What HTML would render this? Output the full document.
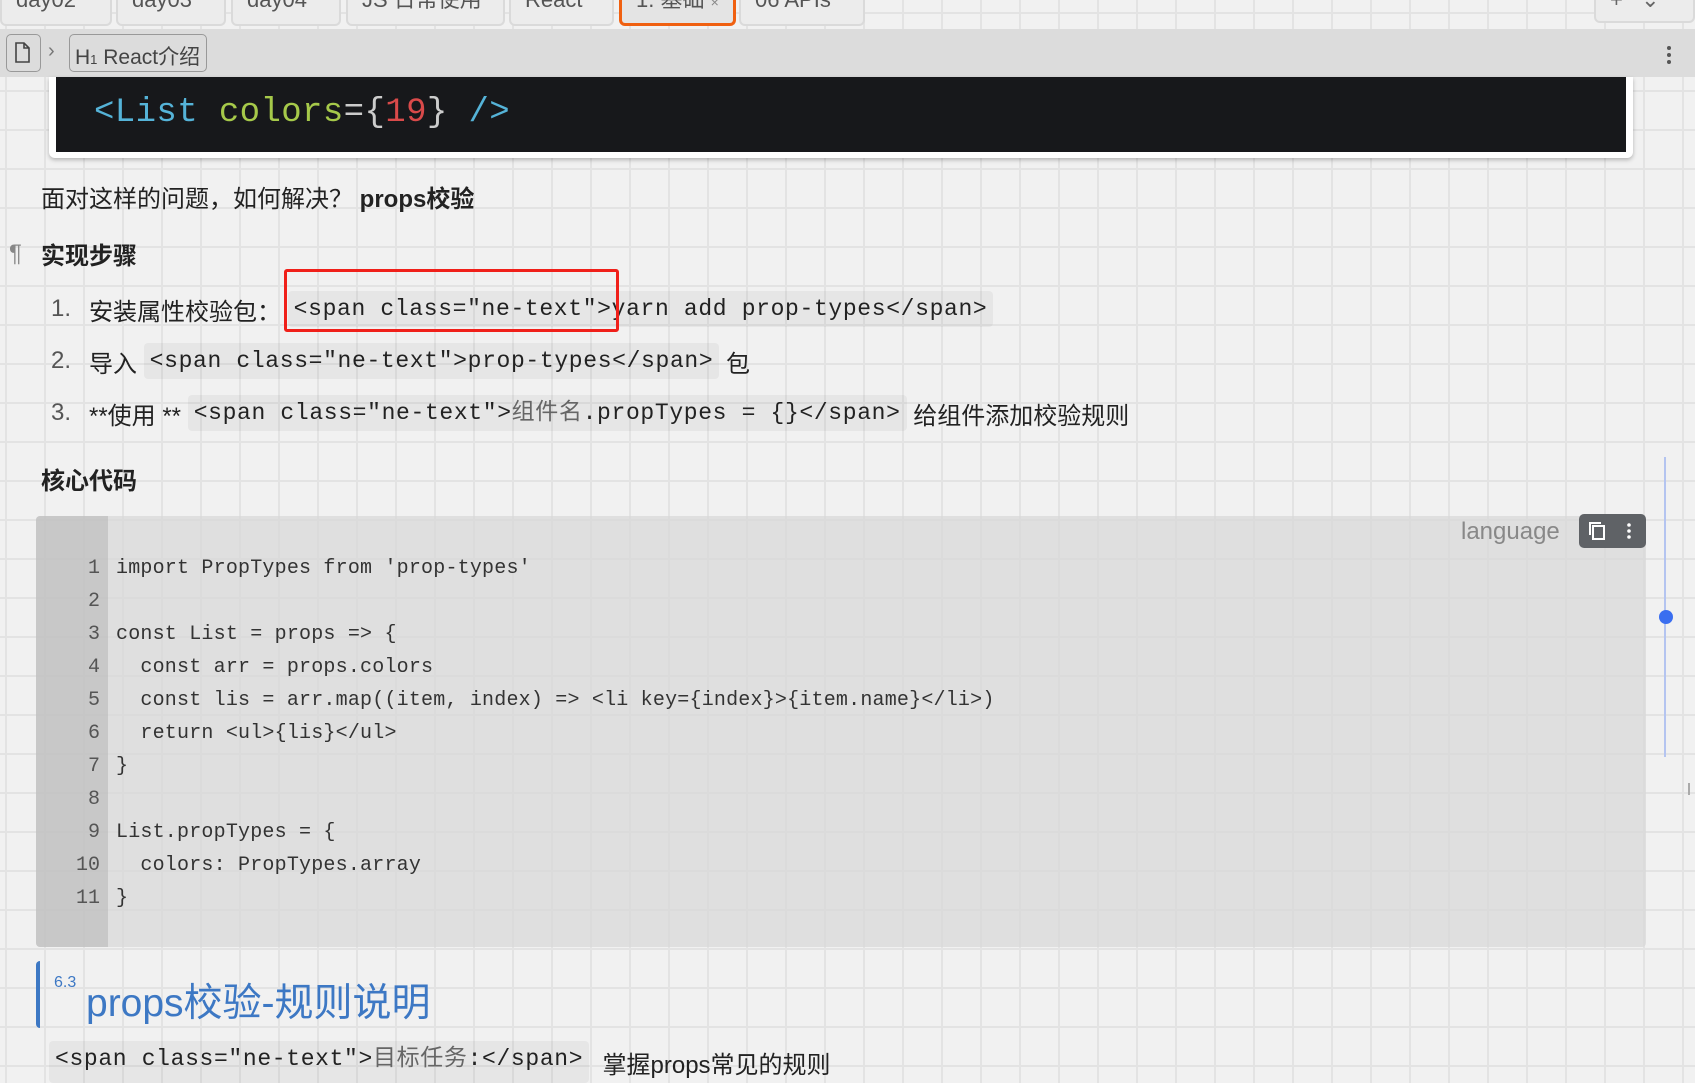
<!DOCTYPE html>
<html><head><meta charset="utf-8"><style>
*{margin:0;padding:0;box-sizing:border-box}
body{width:1695px;height:1076px;overflow:hidden;position:relative;background:#f1f1f1;
background-image:linear-gradient(90deg,#e3e3e3 0,#e3e3e3 2px,transparent 2px),linear-gradient(#e3e3e3 0,#e3e3e3 2px,transparent 2px);
background-size:39px 39px;background-position:5px 12px;
font-family:"Liberation Sans","Noto Sans CJK SC",sans-serif;color:#222}
.a{position:absolute;white-space:pre}
svg{display:block}
.tab{position:absolute;top:-8px;height:34px;border:2px solid #dadada;border-top:none;border-radius:0 0 6px 6px;background:#ececec;font-size:22px;color:#555;padding-left:14px;line-height:16px}
.bar{position:absolute;left:0;top:29px;width:1695px;height:48px;background:#dcdcdc}
.mono{font-family:"Liberation Mono","Noto Sans CJK SC",monospace}
.ic{font-family:"Liberation Mono","Noto Sans CJK SC",monospace;font-size:23px;letter-spacing:0.65px;background:rgba(0,0,0,0.045);border-radius:4px;padding:4px 6px;display:inline-block;line-height:28px}
.row{position:absolute;white-space:pre;display:flex;align-items:center;height:40px;font-size:24px}
.code{font-size:20px;letter-spacing:0.2px;color:#333}
.ln{position:absolute;width:64px;text-align:right;font-size:20px;color:#555}
</style></head><body>
<div class="tab" style="left:0;width:112px">day02</div>
<div class="tab" style="left:116px;width:110px">day03</div>
<div class="tab" style="left:231px;width:110px">day04</div>
<div class="tab" style="left:346px;width:159px">JS 日常使用</div>
<div class="tab" style="left:509px;width:105px">React</div>
<div class="tab" style="left:619px;width:117px;border:3px solid #f06010;border-top:none;background:#e4e4e4">1. 基础 <span style="font-size:14px;color:#888">×</span></div>
<div class="tab" style="left:739px;width:126px">06 APIs</div>
<div class="tab" style="left:1594px;width:101px;height:31px;color:#666">+ &nbsp;&nbsp;⌄</div>
<div class="bar"></div>
<div class="a" style="left:6px;top:34px;width:35px;height:38px;border:1.5px solid #999;border-radius:5px"><svg width="32" height="35" viewBox="0 0 32 35"><path d="M9 8h8l5 5v14h-13z M17 8v5h5" fill="none" stroke="#444" stroke-width="1.6"/></svg></div>
<div class="a" style="left:48px;top:40px;font-size:20px;color:#777">›</div>
<div class="a" style="left:69px;top:34px;width:138px;height:38px;border:1.5px solid #999;border-radius:5px;font-size:21px;color:#444;padding:6px 5px">H<span style="font-size:13px">1</span> React介绍</div>
<div class="a" style="left:1665px;top:44px"><svg width="8" height="22"><circle cx="4" cy="4" r="2" fill="#555"/><circle cx="4" cy="11" r="2" fill="#555"/><circle cx="4" cy="18" r="2" fill="#555"/></svg></div>
<div class="a" style="left:49px;top:77px;width:1584px;height:81px;background:#fff;border-radius:0 0 6px 6px;box-shadow:0 2px 4px rgba(0,0,0,.25)"></div>
<div class="a" style="left:56px;top:77px;width:1570px;height:75px;background:#17181b"></div>
<div class="a mono" style="left:94px;top:94px;font-size:34px;letter-spacing:0.4px;color:#ccc"><span style="color:#55b3d8">&lt;List</span> <span style="color:#a6c94a">colors</span>={<span style="color:#d94a4a">19</span>} <span style="color:#55b3d8">/&gt;</span></div>
<div class="row" style="left:41px;top:176px">面对这样的问题，如何解决？ <b>props校验</b></div>
<div class="a" style="left:9px;top:240px;font-size:24px;color:#888">¶</div>
<div class="row" style="left:41px;top:233px;font-weight:bold">实现步骤</div>
<div class="row" style="left:51px;top:289px"><span style="color:#555;width:38px">1.</span>安装属性校验包： <span class="ic">&lt;span class="ne-text"&gt;yarn add prop-types&lt;/span&gt;</span></div>
<div class="a" style="left:284px;top:269px;width:335px;height:63px;border:3.5px solid #f0201a;border-radius:3px"></div>
<div class="row" style="left:51px;top:341px"><span style="color:#555;width:38px">2.</span>导入 <span class="ic">&lt;span class="ne-text"&gt;prop-types&lt;/span&gt;</span> 包</div>
<div class="row" style="left:51px;top:393px"><span style="color:#555;width:38px">3.</span>**使用 ** <span class="ic">&lt;span class="ne-text"&gt;<span style="color:#666">组件名</span>.propTypes = {}&lt;/span&gt;</span> 给组件添加校验规则</div>
<div class="row" style="left:41px;top:458px;font-weight:bold">核心代码</div>
<div class="a" style="left:36px;top:516px;width:1610px;height:431px;background:rgba(215,215,215,.7);border-radius:4px"></div>
<div class="a" style="left:36px;top:516px;width:72px;height:431px;background:rgba(190,190,190,.7);border-radius:4px 0 0 4px"></div>
<div class="a" style="left:1461px;top:518px;font-size:24px;color:#888">language</div>
<div class="a" style="left:1579px;top:514px;width:67px;height:34px;background:#5f6266;border-radius:5px"><svg width="67" height="34"><rect x="14" y="12" width="11" height="13" fill="none" stroke="#fff" stroke-width="2"/><path d="M11 21V9h11" fill="none" stroke="#fff" stroke-width="2"/><circle cx="50" cy="11" r="1.8" fill="#fff"/><circle cx="50" cy="17" r="1.8" fill="#fff"/><circle cx="50" cy="23" r="1.8" fill="#fff"/></svg></div>
<div class="ln mono" style="left:36px;top:552px;line-height:33px">1<br>2<br>3<br>4<br>5<br>6<br>7<br>8<br>9<br>10<br>11</div>
<div class="a mono code" style="left:116px;top:552px;line-height:33px">import PropTypes from 'prop-types'

const List = props => {
  const arr = props.colors
  const lis = arr.map((item, index) => &lt;li key={index}&gt;{item.name}&lt;/li&gt;)
  return &lt;ul&gt;{lis}&lt;/ul&gt;
}

List.propTypes = {
  colors: PropTypes.array
}</div>
<div class="a" style="left:1664px;top:457px;width:2px;height:300px;background:#b4c4f0"></div>
<div class="a" style="left:1659px;top:610px;width:14px;height:14px;border-radius:50%;background:#3a6ef0"></div>
<div class="a" style="left:1688px;top:783px;width:2px;height:12px;background:#aaa"></div>
<div class="a" style="left:36px;top:961px;width:4px;height:67px;background:#3d78c4;border-radius:4px 0 0 4px"></div>
<div class="a" style="left:54px;top:974px;font-size:16px;color:#3d78c4">6.3</div>
<div class="a" style="left:86px;top:972px;font-size:39px;color:#3d78c4">props校验-规则说明</div>
<div class="row" style="left:49px;top:1042px"><span class="ic" style="padding-bottom:10px">&lt;span class="ne-text"&gt;<span style="color:#666">目标任务</span>:&lt;/span&gt;</span>  掌握props常见的规则</div>
</body></html>
